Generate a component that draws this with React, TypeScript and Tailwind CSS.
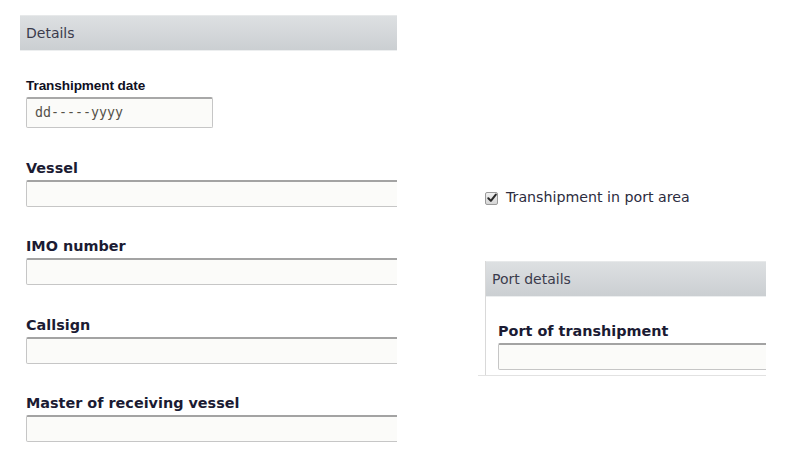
import React from "react";

const labelCls =
  "block text-[14.4px] leading-[18px] font-bold text-[#1b1b33] [font-family:'DejaVu_Sans',Verdana,sans-serif]";
const inputCls =
  "block h-[27px] w-[calc(100%+6px)] rounded-[2px] border border-[#c6c6c6] border-t-[#a3a3a3] border-t-2 bg-[#fbfbf9]";

function Field({ label, gap = "mt-[31px]" }: { label: string; gap?: string }) {
  return (
    <div className={gap}>
      <span className={labelCls}>{label}</span>
      <div className={"mt-[3px] " + inputCls} />
    </div>
  );
}

function PanelHeader({ title }: { title: string }) {
  return (
    <div className="flex h-[36px] items-center border-t border-b border-t-[#e7e9ea] border-b-[#eceeef] bg-gradient-to-b from-[#dde0e2] to-[#cbcfd2] px-[6px] text-[14px] text-[#3b3b4c] [font-family:'DejaVu_Sans',Verdana,sans-serif]">
      {title}
    </div>
  );
}

export default function App() {
  return (
    <div className="flex h-[475px] w-[798px] bg-white">
      {/* left column: transhipment details */}
      <div className="ml-[20px] w-[377px] overflow-hidden pt-[15px]">
        <PanelHeader title="Details" />
        <div className="pl-[6px]">
          <div className="mt-[27px]">
            <span className="block text-[13.6px] leading-[16px] font-bold tracking-[-0.1px] text-[#10101f] [font-family:'Liberation_Sans',Arial,sans-serif]">
              Transhipment date
            </span>
            <div className="mt-[3px] flex h-[31px] w-[187px] items-center rounded-[2px] border border-[#c6c6c6] border-t-2 border-t-[#a8a8a8] bg-[#fbfbf9] pl-[8px] text-[13.3px] text-[#555048] [font-family:'DejaVu_Sans_Mono',monospace]">
              dd-----yyyy
            </div>
          </div>
          <Field label="Vessel" />
          <Field label="IMO number" gap="mt-[30px]" />
          <Field label="Callsign" gap="mt-[31px]" />
          <Field label="Master of receiving vessel" gap="mt-[30px]" />
        </div>
      </div>

      {/* right column: port area */}
      <div className="ml-[81px] w-[288px] pt-[189px]">
        <label className="ml-[7px] flex h-[18px] items-center gap-[8px] text-[14.2px] text-[#2c2c3e] [font-family:'DejaVu_Sans',Verdana,sans-serif]">
          <span className="flex h-[13px] w-[13px] items-center justify-center rounded-[2px] border border-[#9a9a9a] bg-gradient-to-b from-[#f0f0f0] to-[#d6d6d6]">
            <svg width="10" height="10" viewBox="0 0 10 10">
              <path
                d="M1.3 5.2 L3.9 7.9 L8.8 1.6"
                fill="none"
                stroke="#2a2a2a"
                strokeWidth="2"
                strokeLinecap="round"
                strokeLinejoin="round"
              />
            </svg>
          </span>
          Transhipment in port area
        </label>

        <div className="mt-[54px]">
          <div className="ml-[7px] overflow-hidden border-l border-[#d9d9d9]">
            <PanelHeader title="Port details" />
            <div className="pl-[12px] pt-[25px] pb-[5px]">
              <span className={labelCls}>Port of transhipment</span>
              <div className={"mt-[3px] " + inputCls} />
            </div>
          </div>
          <div className="h-px w-full bg-[#e2e2e2]" />
        </div>
      </div>
    </div>
  );
}
